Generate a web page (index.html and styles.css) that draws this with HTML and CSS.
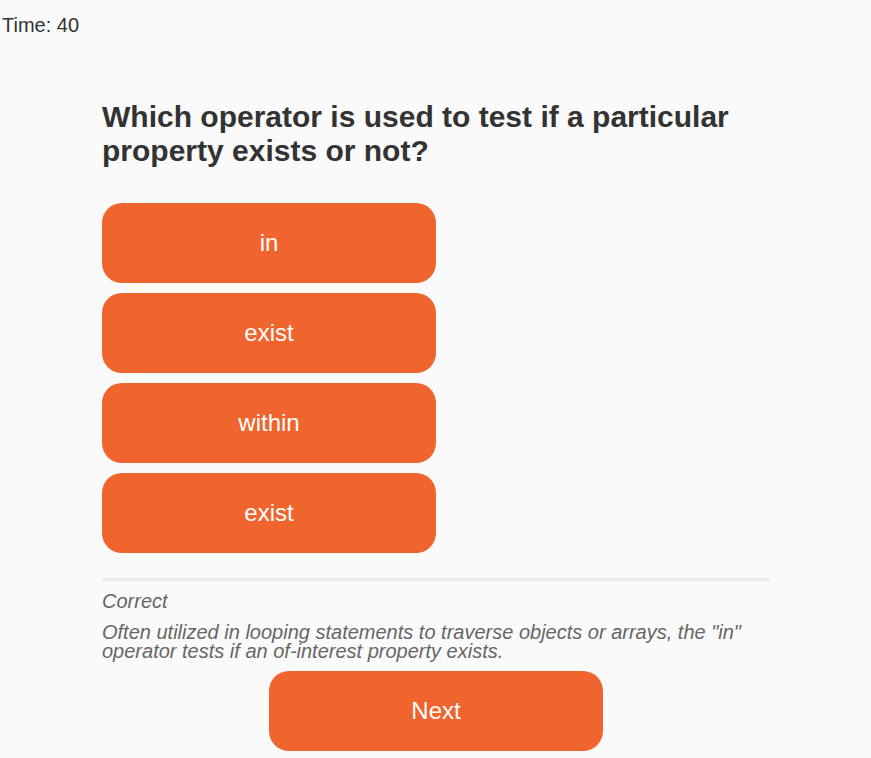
FILE: index.html
```html
<!DOCTYPE html>
<html>
<head>
<meta charset="utf-8">
<link rel="stylesheet" href="styles.css">
</head>
<body>
<div class="timer">Time: 40</div>
<main class="quiz">
  <h1 class="question">Which operator is used to test if a particular property exists or not?</h1>
  <div class="answers">
    <button class="btn">in</button>
    <button class="btn">exist</button>
    <button class="btn">within</button>
    <button class="btn">exist</button>
  </div>
  <hr class="divider">
  <p class="result">Correct</p>
  <p class="explain">Often utilized in looping statements to traverse objects or arrays, the "in" operator tests if an of-interest property exists.</p>
  <div class="next-row">
    <button class="btn">Next</button>
  </div>
</main>
</body>
</html>
```
FILE: styles.css
```css
html, body {
  margin: 0;
  padding: 0;
  background: #fafafa;
  font-family: "Liberation Sans", Arial, sans-serif;
  color: #333;
}
.timer {
  padding: 14px 0 0 2px;
  font-size: 20px;
  line-height: 22px;
}
.quiz {
  width: 668px;
  margin: 0 0 0 102px;
}
.question {
  margin: 64px 0 0 0;
  font-size: 30px;
  line-height: 34px;
  font-weight: bold;
  color: #333;
}
.answers {
  margin-top: 35px;
  display: flex;
  flex-direction: column;
  gap: 10px;
}
.btn {
  width: 334px;
  height: 80px;
  border: none;
  border-radius: 20px;
  background: #f0642d;
  color: #fff;
  font-family: "Liberation Sans", Arial, sans-serif;
  font-size: 24px;
  padding: 0;
}
.divider {
  margin: 25px 0 0 0;
  border: none;
  height: 3px;
  background: #ececec;
}
.result {
  margin: 9px 0 0 0;
  font-style: italic;
  font-size: 20px;
  line-height: 22px;
  color: #666;
}
.explain {
  margin: 11px 0 0 0;
  font-style: italic;
  font-size: 20px;
  line-height: 19px;
  color: #666;
}
.next-row {
  display: flex;
  justify-content: center;
  margin-top: 10px;
}
```
